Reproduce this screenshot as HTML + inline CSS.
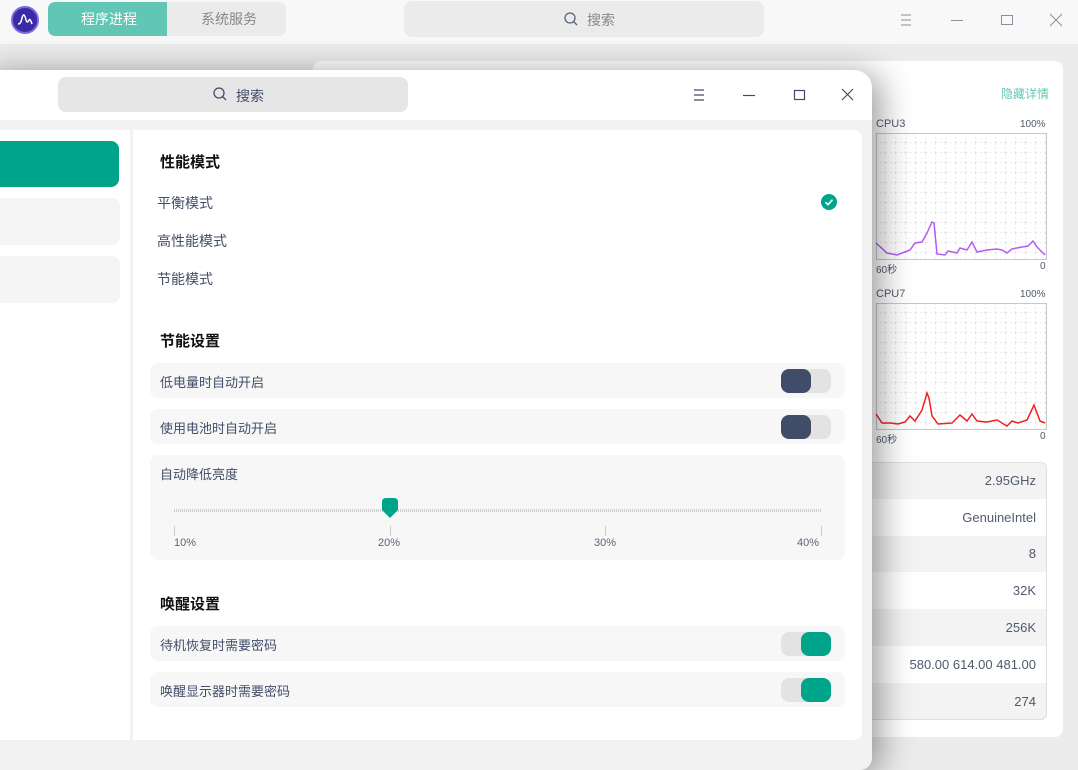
<!DOCTYPE html>
<html><head><meta charset="utf-8"><style>
*{margin:0;padding:0;box-sizing:border-box}
body{width:1078px;height:750px;overflow:hidden;position:relative;background:#ececec;font-family:"Liberation Sans","Noto Sans CJK SC",sans-serif;}
.abs{position:absolute}
.t{position:absolute;white-space:nowrap}
</style></head><body>
<div class="abs" style="left:0;top:0;width:1078px;height:44px;background:#f8f8f8"></div>
<div class="abs" style="left:11px;top:6px;width:28px;height:28px;border-radius:50%;background:#3b2aa8;border:2px solid #7a6ae0"></div>
<svg class="abs" style="left:11px;top:6px" width="28" height="28"><path d="M7 18 Q10 18 11 12 Q13 5 15 14 Q16 18 18 14 Q19 12 21 18" stroke="#fff" stroke-width="1.5" fill="none"/></svg>
<div class="abs" style="left:48px;top:2px;width:238px;height:34px;border-radius:7px;background:#ebebeb;overflow:hidden">
<div class="abs" style="left:0;top:0;width:119px;height:34px;background:#61c6b4"></div></div>
<div class="t" style="left:81px;top:9px;font-size:14px;color:#fff">程序进程</div>
<div class="t" style="left:201px;top:9px;font-size:14px;color:#888">系统服务</div>
<div class="abs" style="left:404px;top:1px;width:360px;height:36px;border-radius:8px;background:#ebebeb"></div>
<svg class="abs" style="left:563px;top:11px" width="16" height="16"><circle cx="7" cy="7" r="5" stroke="#5a6478" stroke-width="1.3" fill="none"/><path d="M10.5 10.5L14 14" stroke="#5a6478" stroke-width="1.3"/></svg>
<div class="t" style="left:587px;top:10px;font-size:14px;color:#888">搜索</div>
<svg class="abs" style="left:895px;top:10px" width="170" height="20"><g stroke="#8a90a0" stroke-width="1" fill="none"><path d="M6 5h10M6 10h10M6 15h10"/><path d="M56 10.5h12"/><rect x="106.5" y="5.5" width="11" height="9"/><path d="M155 4l12 12M167 4l-12 12"/></g></svg>
<div class="abs" style="left:313px;top:61px;width:750px;height:676px;background:#fff;border-radius:8px"></div>
<div class="t" style="left:1001px;top:85px;font-size:12px;color:#5fc9b5">隐藏详情</div>
<div class="t" style="left:876px;top:118px;font-size:11px;color:#505a6e">CPU3</div>
<div class="t" style="left:1020px;top:119px;font-size:10px;color:#505a6e">100%</div>
<div class="t" style="left:876px;top:261px;font-size:10px;color:#505a6e">60秒</div>
<div class="t" style="left:1040px;top:261px;font-size:10px;color:#505a6e">0</div>
<div class="t" style="left:876px;top:288px;font-size:11px;color:#505a6e">CPU7</div>
<div class="t" style="left:1020px;top:289px;font-size:10px;color:#505a6e">100%</div>
<div class="t" style="left:876px;top:431px;font-size:10px;color:#505a6e">60秒</div>
<div class="t" style="left:1040px;top:431px;font-size:10px;color:#505a6e">0</div>
<svg class="abs" style="left:0;top:0" width="1078" height="750">
<defs><pattern id="g" x="876" y="133" width="10" height="10" patternUnits="userSpaceOnUse"><path d="M10 0V10M0 10H10" stroke="#b8bec8" stroke-width="0.6" stroke-dasharray="2 2"/></pattern></defs>
<rect x="876.5" y="133.5" width="170" height="126" fill="url(#g)" stroke="#c4c9d0"/>
<rect x="876.5" y="303.5" width="170" height="126" fill="url(#g)" stroke="#c4c9d0"/>
<polyline fill="none" stroke="#b35cf0" stroke-width="1.5" points="876,243 887,253 897,255 910,250 915,243 922,242 927,233 932,222 934,223 937,254 945,255 948,251 957,253 960,248 967,250 972,242 977,252 987,250 997,249 1002,250 1007,253 1012,249 1022,247 1028,246 1033,241 1037,247 1045,255"/>
<polyline fill="none" stroke="#f02020" stroke-width="1.5" points="876,414 882,423 890,423 898,424 905,422 910,416 915,421 922,410 927,393 929,398 932,416 938,424 952,423 960,415 967,421 972,414 977,421 987,422 997,420 1007,426 1012,421 1018,423 1027,420 1034,405 1040,421 1045,423"/>
</svg>
<div class="abs" style="left:860px;top:462px;width:187px;height:258px;border:1px solid #dcdfe3;border-radius:6px;overflow:hidden;font-size:13px;color:#505a6e;text-align:right">
<div style="height:36px;line-height:36px;background:#f3f3f3;padding-right:10px">2.95GHz</div>
<div style="height:37px;line-height:37px;background:#fff;padding-right:10px">GenuineIntel</div>
<div style="height:36px;line-height:36px;background:#f3f3f3;padding-right:10px">8</div>
<div style="height:37px;line-height:37px;background:#fff;padding-right:10px">32K</div>
<div style="height:37px;line-height:37px;background:#f3f3f3;padding-right:10px">256K</div>
<div style="height:37px;line-height:37px;background:#fff;padding-right:10px">580.00 614.00 481.00</div>
<div style="height:37px;line-height:37px;background:#f3f3f3;padding-right:10px">274</div>
</div>
<div class="abs" style="left:-20px;top:70px;width:892px;height:700px;background:#f2f2f2;border-radius:0 18px 12px 0;box-shadow:8px 4px 34px rgba(0,0,0,.4);overflow:hidden">
<div class="abs" style="left:0;top:0;width:892px;height:50px;background:#fff"></div>
</div>
<div class="abs" style="left:58px;top:77px;width:350px;height:35px;border-radius:8px;background:#e6e6e6"></div>
<svg class="abs" style="left:212px;top:86px" width="16" height="16"><circle cx="7" cy="7" r="5" stroke="#414d68" stroke-width="1.3" fill="none"/><path d="M10.5 10.5L14 14" stroke="#414d68" stroke-width="1.3"/></svg>
<div class="t" style="left:236px;top:86px;font-size:14px;color:#414d68">搜索</div>
<svg class="abs" style="left:690px;top:85px" width="170" height="20"><g stroke="#414d68" stroke-width="1.2" fill="none"><path d="M4 5h10M4 10h10M4 15h10"/><path d="M53 10.5h12"/><rect x="104.5" y="5.5" width="10" height="9"/><path d="M152 4l11 11M163 4l-11 11"/></g></svg>
<div class="abs" style="left:0;top:130px;width:130px;height:610px;background:#fff"></div>
<div class="abs" style="left:-10px;top:141px;width:129px;height:46px;background:#00a48a;border-radius:8px"></div>
<div class="abs" style="left:-10px;top:198px;width:130px;height:47px;background:#f5f5f5;border-radius:8px"></div>
<div class="abs" style="left:-10px;top:256px;width:130px;height:47px;background:#f5f5f5;border-radius:8px"></div>
<div class="abs" style="left:133px;top:130px;width:729px;height:610px;background:#fff;border-radius:0 8px 8px 0"></div>
<div class="t" style="left:160px;top:151px;font-size:15px;font-weight:bold;color:#111">性能模式</div>
<div class="t" style="left:157px;top:193px;font-size:14px;color:#414d68">平衡模式</div>
<div class="t" style="left:157px;top:231px;font-size:14px;color:#414d68">高性能模式</div>
<div class="t" style="left:157px;top:269px;font-size:14px;color:#414d68">节能模式</div>
<svg class="abs" style="left:821px;top:194px" width="16" height="16"><circle cx="8" cy="8" r="8" fill="#00a48a"/><path d="M4.5 8.2l2.5 2.5 4.5-5" stroke="#fff" stroke-width="1.6" fill="none"/></svg>
<div class="t" style="left:160px;top:330px;font-size:15px;font-weight:bold;color:#111">节能设置</div>
<div class="abs" style="left:150px;top:363px;width:695px;height:35px;background:#f7f7f7;border-radius:8px"></div>
<div class="t" style="left:160px;top:372px;font-size:13px;color:#414d68">低电量时自动开启</div>
<div class="abs" style="left:781px;top:369px;width:50px;height:24px;background:#e3e3e3;border-radius:8px"><div class="abs" style="left:0;top:0;width:30px;height:24px;background:#414d68;border-radius:8px"></div></div>
<div class="abs" style="left:150px;top:409px;width:695px;height:35px;background:#f7f7f7;border-radius:8px"></div>
<div class="t" style="left:160px;top:418px;font-size:13px;color:#414d68">使用电池时自动开启</div>
<div class="abs" style="left:781px;top:415px;width:50px;height:24px;background:#e3e3e3;border-radius:8px"><div class="abs" style="left:0;top:0;width:30px;height:24px;background:#414d68;border-radius:8px"></div></div>
<div class="abs" style="left:150px;top:455px;width:695px;height:105px;background:#f7f7f7;border-radius:8px"></div>
<div class="t" style="left:160px;top:464px;font-size:13px;color:#414d68">自动降低亮度</div>
<div class="abs" style="left:174px;top:509px;width:647px;height:3px;background:repeating-linear-gradient(90deg,#ccc 0 1px,transparent 1px 2px)"></div>
<svg class="abs" style="left:379px;top:497px" width="22" height="26"><path d="M3 5 Q3 1 7 1 H15 Q19 1 19 5 V13 L11 21 L3 13 Z" fill="#00a48a"/></svg>
<div class="abs" style="left:174px;top:526px;width:1px;height:10px;background:#ccc"></div>
<div class="abs" style="left:390px;top:526px;width:1px;height:10px;background:#ccc"></div>
<div class="abs" style="left:605px;top:526px;width:1px;height:10px;background:#ccc"></div>
<div class="abs" style="left:821px;top:526px;width:1px;height:10px;background:#ccc"></div>
<div class="t" style="left:174px;top:537px;font-size:11px;color:#5a6478">10%</div>
<div class="t" style="left:378px;top:537px;font-size:11px;color:#5a6478">20%</div>
<div class="t" style="left:594px;top:537px;font-size:11px;color:#5a6478">30%</div>
<div class="t" style="left:797px;top:537px;font-size:11px;color:#5a6478">40%</div>
<div class="t" style="left:160px;top:593px;font-size:15px;font-weight:bold;color:#111">唤醒设置</div>
<div class="abs" style="left:150px;top:626px;width:695px;height:35px;background:#f7f7f7;border-radius:8px"></div>
<div class="t" style="left:160px;top:635px;font-size:13px;color:#414d68">待机恢复时需要密码</div>
<div class="abs" style="left:781px;top:632px;width:50px;height:24px;background:#e3e3e3;border-radius:8px"><div class="abs" style="left:20px;top:0;width:30px;height:24px;background:#00a48a;border-radius:8px"></div></div>
<div class="abs" style="left:150px;top:672px;width:695px;height:35px;background:#f7f7f7;border-radius:8px"></div>
<div class="t" style="left:160px;top:681px;font-size:13px;color:#414d68">唤醒显示器时需要密码</div>
<div class="abs" style="left:781px;top:678px;width:50px;height:24px;background:#e3e3e3;border-radius:8px"><div class="abs" style="left:20px;top:0;width:30px;height:24px;background:#00a48a;border-radius:8px"></div></div>
</body></html>
